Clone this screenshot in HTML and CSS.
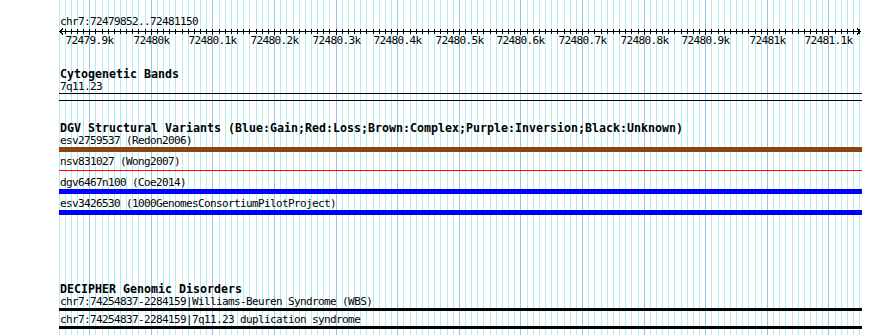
FILE: index.html
```html
<!DOCTYPE html>
<html>
  <head>
    <meta charset="utf-8">
    <title>chr7:72479852..72481150</title>
    <link rel="stylesheet" href="styles.css">
  </head>
  <body>
    <div class="browser">
      <div id="grid" class="grid"></div>

      <div class="tracks">
        <div class="ruler">
          <div class="ruler-name">chr7:72479852..72481150</div>
          <svg id="axis" class="ruler-axis" width="803" height="7"></svg>
          <div id="ruler-labels" class="ruler-labels"></div>
        </div>

        <div class="track track-bands">
          <div class="track-title">Cytogenetic Bands</div>
          <div class="feature-label">7q11.23</div>
          <div class="band"></div>
        </div>

        <div class="track track-dgv">
          <div class="track-title">DGV Structural Variants (Blue:Gain;Red:Loss;Brown:Complex;Purple:Inversion;Black:Unknown)</div>
          <div class="feature">
            <div class="feature-label">esv2759537 (Redon2006)</div>
            <div class="bar bar-complex"></div>
          </div>
          <div class="feature">
            <div class="feature-label">nsv831027 (Wong2007)</div>
            <div class="bar bar-loss"></div>
          </div>
          <div class="feature">
            <div class="feature-label">dgv6467n100 (Coe2014)</div>
            <div class="bar bar-gain"></div>
          </div>
          <div class="feature">
            <div class="feature-label">esv3426530 (1000GenomesConsortiumPilotProject)</div>
            <div class="bar bar-gain"></div>
          </div>
        </div>

        <div class="track track-decipher">
          <div class="track-title">DECIPHER Genomic Disorders</div>
          <div class="feature">
            <div class="feature-label">chr7:74254837-2284159|Williams-Beuren Syndrome (WBS)</div>
            <div class="bar bar-disorder"></div>
          </div>
          <div class="feature">
            <div class="feature-label">chr7:74254837-2284159|7q11.23 duplication syndrome</div>
            <div class="bar bar-disorder"></div>
          </div>
        </div>
      </div>
    </div>

    <script src="script.js"></script>
  </body>
</html>
```

FILE: styles.css
```css
body {
  margin: 0;
  background: #fff;
  font-family: "DejaVu Sans Mono", "Liberation Mono", monospace;
  color: #000;
}

.browser {
  position: relative;
  width: 890px;
  height: 335px;
  overflow: hidden;
}

/* vertical guide lines behind the tracks */
.grid {
  position: absolute;
  top: 0;
  left: 0;
  width: 100%;
  height: 100%;
}

.grid-line {
  position: absolute;
  top: 0;
  bottom: 0;
  width: 1px;
  background: #b2eef0;
}

.grid-line.major {
  background: #8fc8e8;
}

.tracks {
  position: relative;
  padding: 16px 0 0 59px;
  width: 803px;
}

/* 6px character cells, like the small bitmap font */
.ruler-name,
.feature-label,
.ruler-labels {
  font-size: 11px;
  letter-spacing: -0.62px;
  line-height: 12px;
  height: 12px;
  white-space: nowrap;
}

.ruler-name,
.feature-label {
  padding-left: 1px;
}

.ruler-axis {
  display: block;
  overflow: visible;
  shape-rendering: crispEdges;
}

.ruler-labels {
  position: relative;
}

.ruler-label {
  position: absolute;
  top: 0;
  transform: translateX(-50%);
}

/* 7px cells for the bold track names */
.track-title {
  font-size: 11.63px;
  font-weight: bold;
  line-height: 12px;
  height: 12px;
  padding-left: 1px;
  padding-bottom: 1px;
  white-space: nowrap;
}

.track-bands {
  padding-top: 21px;
}

.track-dgv {
  padding-top: 21px;
}

.band {
  box-sizing: border-box;
  height: 8px;
  border-top: 1px solid #000;
  border-bottom: 1px solid #000;
}

.track-dgv .feature {
  padding-bottom: 4px;
}

.bar {
  height: 5px;
}

.bar-complex {
  background: #8b4513;
}

.bar-gain {
  background: #0000ff;
}

/* losses are drawn as a thin line through the middle of the row */
.bar-loss {
  height: 1px;
  padding: 2px 0;
  background: #ff0000 content-box;
}

.track-decipher {
  padding-top: 64px;
}

.track-decipher .feature {
  padding-bottom: 3px;
}

.bar-disorder {
  height: 3px;
  background: #000;
}
```

FILE: script.js
```js
// region shown: chr7:72479852..72481150, ~0.616 px per base
var END = 72481150;
var ORIGIN = 59; // left edge of the track column

function bpToX(bp) {
  return Math.floor(89.7 + (bp - 72479900) * 0.61608);
}

var grid = document.getElementById('grid');
var axis = document.getElementById('axis');
var labels = document.getElementById('ruler-labels');
var svgNS = 'http://www.w3.org/2000/svg';

function addGridLine(x, major) {
  var line = document.createElement('div');
  line.className = major ? 'grid-line major' : 'grid-line';
  line.style.left = x + 'px';
  grid.appendChild(line);
}

function addSvg(tag, attrs) {
  var el = document.createElementNS(svgNS, tag);
  for (var k in attrs) el.setAttribute(k, attrs[k]);
  axis.appendChild(el);
}

function addLabel(x, bp) {
  var span = document.createElement('span');
  span.className = 'ruler-label';
  span.style.left = (x + 0.5) + 'px';
  span.textContent = parseFloat((bp / 1000).toFixed(1)) + 'k';
  labels.appendChild(span);
}

// axis line with arrows at both ends
addSvg('line', { x1: 1, y1: 3.5, x2: 801, y2: 3.5, stroke: '#000' });
addSvg('polyline', { points: '4,0.5 1,3.5 4,6.5', fill: 'none', stroke: '#000' });
addSvg('polyline', { points: '798,0.5 801,3.5 798,6.5', fill: 'none', stroke: '#000' });

addGridLine(59, false);
for (var bp = 72479860; bp <= END; bp += 10) {
  var x = bpToX(bp);
  var major = bp % 100 === 0;
  addGridLine(x, major);
  addSvg('line', {
    x1: x - ORIGIN + 0.5, y1: 1,
    x2: x - ORIGIN + 0.5, y2: major ? 7 : 6,
    stroke: '#000'
  });
  if (major) addLabel(x - ORIGIN, bp);
}
```
